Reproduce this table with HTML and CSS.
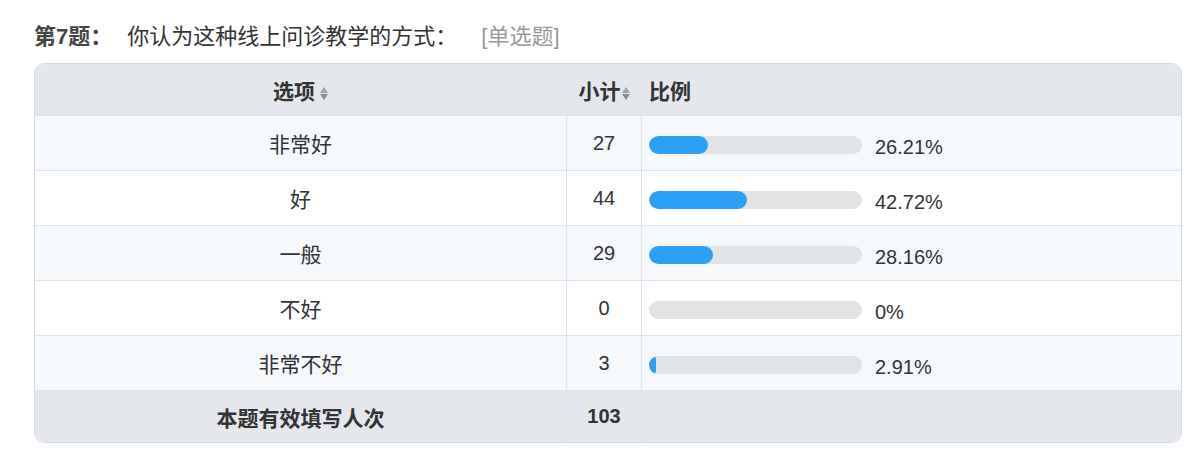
FILE: index.html
```html
<!DOCTYPE html>
<html>
  <head>
    <title>第7题</title>
    <link rel="stylesheet" href="styles.css">
  </head>
  <body>
    <div class="container">
      <div class="question">
        <span class="q-num">第7题：</span>
        <span class="q-text">你认为这种线上问诊教学的方式：</span>
        <span class="q-type">[单选题]</span>
      </div>
      <div class="table-wrap">
        <table class="stats">
          <thead>
            <tr>
              <th class="col-option">选项<span class="sort"></span></th>
              <th class="col-count">小计<span class="sort"></span></th>
              <th class="col-ratio">比例</th>
            </tr>
          </thead>
          <tbody>
            <tr>
              <td class="col-option">非常好</td>
              <td class="col-count">27</td>
              <td class="col-ratio"><div class="ratio"><div class="bar"><div class="fill" style="width: 27.8%"></div></div><span class="pct">26.21%</span></div></td>
            </tr>
            <tr>
              <td class="col-option">好</td>
              <td class="col-count">44</td>
              <td class="col-ratio"><div class="ratio"><div class="bar"><div class="fill" style="width: 45.8%"></div></div><span class="pct">42.72%</span></div></td>
            </tr>
            <tr>
              <td class="col-option">一般</td>
              <td class="col-count">29</td>
              <td class="col-ratio"><div class="ratio"><div class="bar"><div class="fill" style="width: 30.2%"></div></div><span class="pct">28.16%</span></div></td>
            </tr>
            <tr>
              <td class="col-option">不好</td>
              <td class="col-count">0</td>
              <td class="col-ratio"><div class="ratio"><div class="bar"><div class="fill" style="width: 0%"></div></div><span class="pct">0%</span></div></td>
            </tr>
            <tr>
              <td class="col-option">非常不好</td>
              <td class="col-count">3</td>
              <td class="col-ratio"><div class="ratio"><div class="bar"><div class="fill" style="width: 3.3%"></div></div><span class="pct">2.91%</span></div></td>
            </tr>
          </tbody>
          <tfoot>
            <tr>
              <td class="col-option">本题有效填写人次</td>
              <td class="col-count">103</td>
              <td class="col-ratio"></td>
            </tr>
          </tfoot>
        </table>
      </div>
    </div>
  </body>
</html>
```

FILE: styles.css
```css
body {
  margin: 0;
  background: #fff;
  color: #333;
  font: 20px "Liberation Sans", "Noto Sans CJK SC", sans-serif;
}
.container {
  padding: 18px 19px 0 34px;
}
.question {
  display: flex;
  align-items: center;
  height: 32px;
  margin-bottom: 13px;
  font-size: 22px;
}
.q-num {
  font-weight: bold;
  color: #444;
  margin-right: 15px;
}
.q-text {
  color: #333;
  margin-right: 24px;
}
.q-type {
  color: #999;
}
.table-wrap {
  border: 1px solid #d7dade;
  border-radius: 10px;
  overflow: hidden;
}
.stats {
  width: 100%;
  border-collapse: collapse;
}
.stats th,
.stats td {
  padding: 0 7px;
  border-bottom: 1px solid #dfe2e6;
}
.stats th {
  height: 51px;
  background: #e4e7eb;
  font-weight: bold;
  font-size: 21px;
  color: #333;
}
.stats tbody td {
  height: 54px;
  background: #fff;
}
.stats tbody tr:nth-child(odd) td {
  background: #f5f9fc;
}
.stats tbody .col-option,
.stats tfoot .col-option {
  font-size: 21px;
}
.stats tfoot td {
  height: 51px;
  border-bottom: none;
  background: #e4e7eb;
  font-weight: bold;
}
.col-option {
  width: 517px;
  text-align: center;
  border-right: 1px solid #dfe2e6;
}
.col-count {
  width: 60px;
  text-align: center;
  border-right: 1px solid #dfe2e6;
}
.col-ratio {
  text-align: left;
}
.sort {
  display: inline-block;
  position: relative;
  width: 8px;
  height: 13px;
  margin-left: 5px;
  vertical-align: -1px;
}
.sort::before,
.sort::after {
  content: "";
  position: absolute;
  left: 0;
  border-left: 4px solid transparent;
  border-right: 4px solid transparent;
}
.sort::before {
  top: 0;
  border-bottom: 6px solid #a0a0a0;
}
.sort::after {
  bottom: 0;
  border-top: 6px solid #8c8c8c;
}
.col-count .sort {
  margin-left: 1px;
}
.ratio {
  display: flex;
  align-items: center;
}
.bar {
  width: 213px;
  height: 18px;
  margin-top: 3px;
  border-radius: 9px;
  background: #e2e3e5;
  overflow: hidden;
}
.fill {
  height: 100%;
  border-radius: 9px;
  background: #2d9ff5;
}
.pct {
  margin-left: 13px;
  margin-top: 8px;
  color: #333;
}
```
